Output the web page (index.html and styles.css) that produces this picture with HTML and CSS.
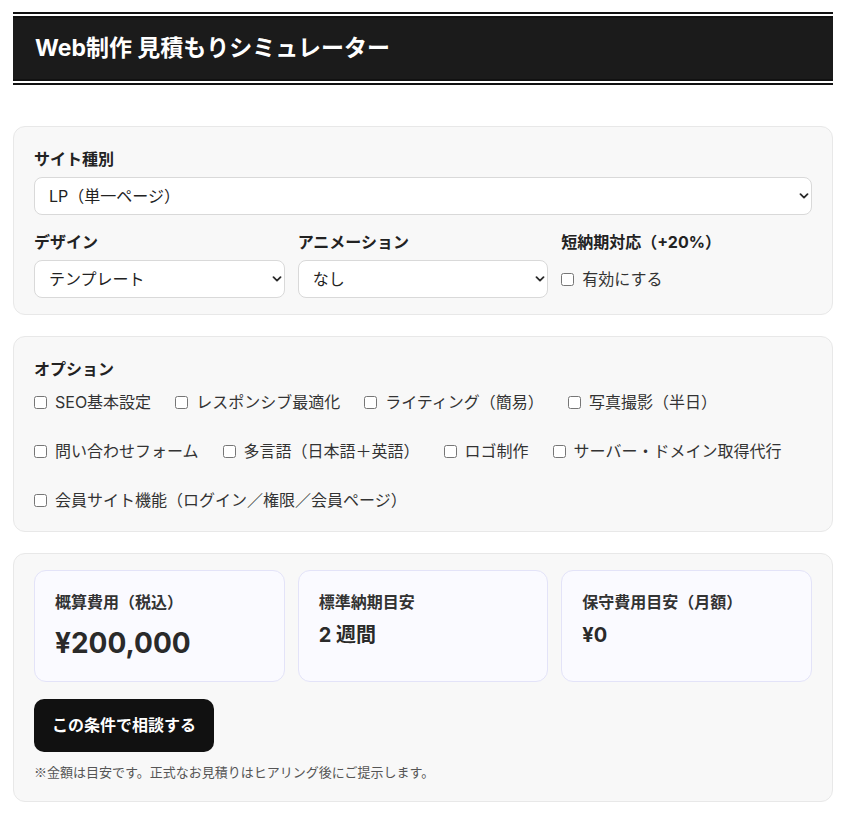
FILE: index.html
```html
<!DOCTYPE html>
<html lang="ja">
<head>
<meta charset="utf-8">
<title>Web制作 見積もりシミュレーター</title>
<link rel="stylesheet" href="styles.css">
</head>
<body>
<main class="page">
  <h1 class="title-bar">Web制作 見積もりシミュレーター</h1>

  <section class="panel">
    <div class="field">
      <label class="field-label" for="site-type">サイト種別</label>
      <div class="select-box">
        <select id="site-type" class="select"><option>LP（単一ページ）</option></select>
        <svg class="chev" width="10" height="6" viewBox="0 0 10 6"><path d="M1.5 1.2 L5 4.6 L8.5 1.2" fill="none" stroke="#2a2a2a" stroke-width="1.8" stroke-linecap="round" stroke-linejoin="round"/></svg>
      </div>
    </div>
    <div class="field-grid">
      <div class="field">
        <label class="field-label" for="design">デザイン</label>
        <div class="select-box">
          <select id="design" class="select"><option>テンプレート</option></select>
          <svg class="chev" width="10" height="6" viewBox="0 0 10 6"><path d="M1.5 1.2 L5 4.6 L8.5 1.2" fill="none" stroke="#2a2a2a" stroke-width="1.8" stroke-linecap="round" stroke-linejoin="round"/></svg>
        </div>
      </div>
      <div class="field">
        <label class="field-label" for="anim">アニメーション</label>
        <div class="select-box">
          <select id="anim" class="select"><option>なし</option></select>
          <svg class="chev" width="10" height="6" viewBox="0 0 10 6"><path d="M1.5 1.2 L5 4.6 L8.5 1.2" fill="none" stroke="#2a2a2a" stroke-width="1.8" stroke-linecap="round" stroke-linejoin="round"/></svg>
        </div>
      </div>
      <div class="field">
        <span class="field-label">短納期対応（+20%）</span>
        <label class="check-row"><input type="checkbox" class="check"><span>有効にする</span></label>
      </div>
    </div>
  </section>

  <section class="panel">
    <span class="field-label">オプション</span>
    <div class="options">
      <label class="option"><input type="checkbox" class="check"><span>SEO基本設定</span></label>
      <label class="option"><input type="checkbox" class="check"><span>レスポンシブ最適化</span></label>
      <label class="option"><input type="checkbox" class="check"><span>ライティング（簡易）</span></label>
      <label class="option"><input type="checkbox" class="check"><span>写真撮影（半日）</span></label>
      <label class="option"><input type="checkbox" class="check"><span>問い合わせフォーム</span></label>
      <label class="option"><input type="checkbox" class="check"><span>多言語（日本語＋英語）</span></label>
      <label class="option"><input type="checkbox" class="check"><span>ロゴ制作</span></label>
      <label class="option"><input type="checkbox" class="check"><span>サーバー・ドメイン取得代行</span></label>
      <label class="option"><input type="checkbox" class="check"><span>会員サイト機能（ログイン／権限／会員ページ）</span></label>
    </div>
  </section>

  <section class="panel">
    <div class="cards">
      <div class="card">
        <div class="card-label">概算費用（税込）</div>
        <div class="card-value card-value-big">¥200,000</div>
      </div>
      <div class="card">
        <div class="card-label">標準納期目安</div>
        <div class="card-value">2 週間</div>
      </div>
      <div class="card">
        <div class="card-label">保守費用目安（月額）</div>
        <div class="card-value">¥0</div>
      </div>
    </div>
    <div class="actions">
      <button class="btn" type="button">この条件で相談する</button>
    </div>
    <p class="note">※金額は目安です。正式なお見積りはヒアリング後にご提示します。</p>
  </section>
</main>
</body>
</html>
```

FILE: styles.css
```css
* { box-sizing: border-box; }

html, body {
  margin: 0;
  background: #ffffff;
}

body {
  font-family: Inter, "Noto Sans CJK JP", sans-serif;
  color: #222;
  font-size: 16px;
  line-height: 24px;
}

.page {
  display: flex;
  flex-direction: column;
  gap: 21px;
  padding: 12px 16px 16px 13px;
}

.title-bar {
  margin: 0 0 20px;
  padding: 16px 22px;
  font-size: 23px;
  line-height: 29px;
  font-weight: 700;
  color: #ffffff;
  background: #1b1b1b;
  background-clip: padding-box;
  border-top: 6px double #111;
  border-bottom: 6px double #111;
}

.panel {
  background: #f8f8f8;
  border: 1px solid #e8e8e8;
  border-radius: 12px;
  padding: 16px 20px;
}

.field {
  display: flex;
  flex-direction: column;
  min-width: 0;
}

.field-label {
  display: block;
  margin: 4px 0 6px;
  font-size: 16px;
  line-height: 24px;
  font-weight: 700;
  color: #222;
}

.select-box {
  position: relative;
}

.select {
  display: block;
  width: 100%;
  height: 38px;
  margin: 0;
  padding: 0 28px 0 14px;
  font-family: inherit;
  font-size: 16px;
  color: #222;
  background: #ffffff;
  border: 1px solid #d9d9d9;
  border-radius: 8px;
  appearance: none;
  -webkit-appearance: none;
}

.chev {
  position: absolute;
  right: 3px;
  top: 50%;
  margin-top: -3px;
  pointer-events: none;
}

.field-grid {
  display: grid;
  grid-template-columns: 1fr 1fr 1fr;
  column-gap: 13px;
  margin-top: 11px;
}

.check-row {
  display: flex;
  align-items: center;
  gap: 8px;
  height: 38px;
  font-size: 16px;
  color: #333;
}

.check {
  margin: 0;
  width: 13px;
  height: 13px;
  flex: none;
}

.options {
  display: flex;
  flex-wrap: wrap;
  gap: 19px 24px;
}

.option {
  display: flex;
  align-items: center;
  gap: 8px;
  height: 30px;
  font-size: 16px;
  line-height: 30px;
  color: #333;
}

.cards {
  display: grid;
  grid-template-columns: 1fr 1fr 1fr;
  column-gap: 13px;
}

.card {
  background: #fafaff;
  border: 1px solid #e3e3f8;
  border-radius: 12px;
  padding: 20px 20px 16px;
}

.card-label {
  font-size: 16px;
  line-height: 22px;
  font-weight: 700;
  color: #333;
}

.card-value {
  margin-top: 8px;
  font-size: 20px;
  line-height: 28px;
  font-weight: 700;
  color: #2a2a2a;
}

.card-value-big {
  font-size: 28px;
  line-height: 44px;
}

.actions {
  margin-top: 17px;
  display: flex;
}

.btn {
  padding: 16px 18px;
  font-family: inherit;
  font-size: 16px;
  line-height: 21px;
  font-weight: 600;
  color: #ffffff;
  background: #111111;
  border: none;
  border-radius: 10px;
}

.note {
  margin: 10px 0 3px;
  font-family: "Noto Sans CJK JP", sans-serif;
  font-size: 13px;
  line-height: 20px;
  color: #555;
}
```
